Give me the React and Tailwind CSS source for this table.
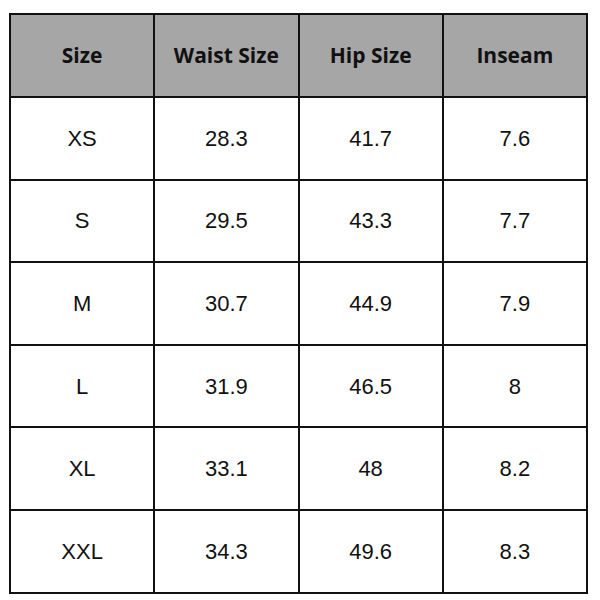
import React from "react";

const rows = [
  ["XS", "28.3", "41.7", "7.6"],
  ["S", "29.5", "43.3", "7.7"],
  ["M", "30.7", "44.9", "7.9"],
  ["L", "31.9", "46.5", "8"],
  ["XL", "33.1", "48", "8.2"],
  ["XXL", "34.3", "49.6", "8.3"],
];

const heads = ["Size", "Waist Size", "Hip Size", "Inseam"];

export default function App() {
  return (
    <div className="w-[600px] h-[600px] bg-white pl-[9px] pt-[13px]">
      <table className="w-[579px] border-collapse table-fixed">
        <thead>
          <tr className="bg-[#a6a6a6]">
            {heads.map((h) => (
              <th
                key={h}
                className="h-[83px] border-2 border-[#111] text-[21px] font-bold text-[#111] font-['Open_Sans',sans-serif]"
              >
                {h}
              </th>
            ))}
          </tr>
        </thead>
        <tbody>
          {rows.map((r) => (
            <tr key={r[0]}>
              {r.map((c, i) => (
                <td
                  key={i}
                  className="h-[82.6px] border-2 border-[#111] text-center text-[22px] text-[#111] font-['Liberation_Sans',sans-serif]"
                >
                  {c}
                </td>
              ))}
            </tr>
          ))}
        </tbody>
      </table>
    </div>
  );
}
